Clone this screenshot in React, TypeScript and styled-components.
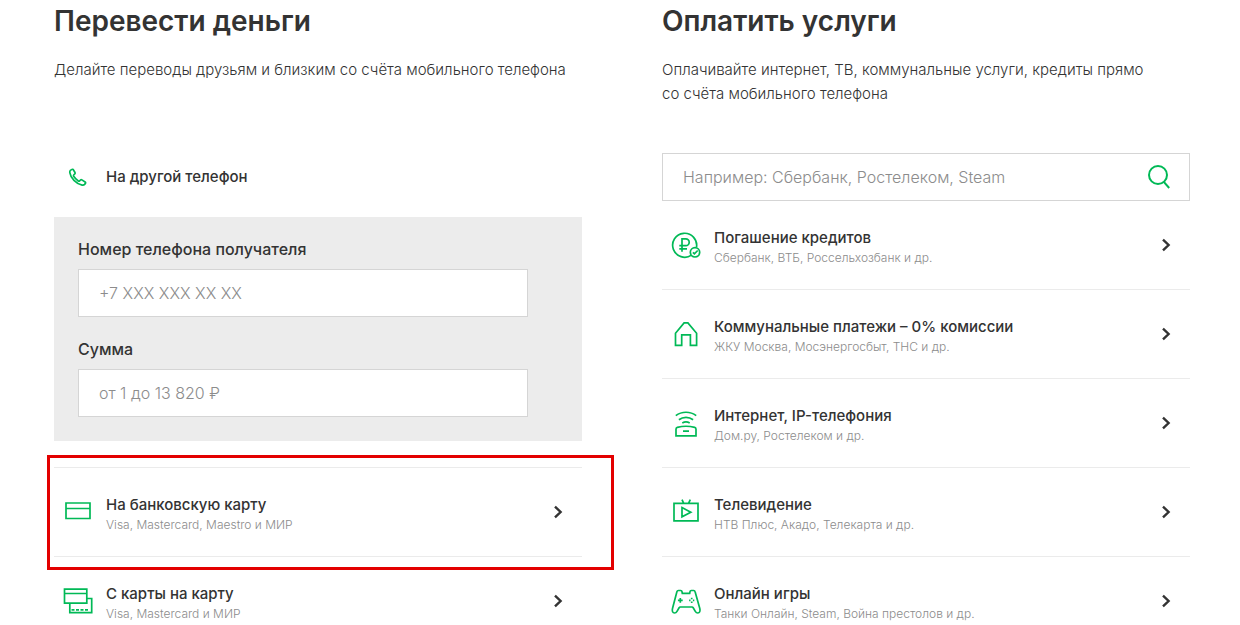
import React from "react";
import styled, { createGlobalStyle } from "styled-components";

const GlobalStyle = createGlobalStyle`
  *, *::before, *::after { box-sizing: border-box; }
  body {
    margin: 0;
    background: #fff;
    color: #333;
    font-family: Inter, Roboto, "Liberation Sans", sans-serif;
  }
`;

const Page = styled.main`
  display: grid;
  grid-template-columns: repeat(2, minmax(0, 1fr));
  column-gap: 80px;
  padding: 0 50px 0 54px;
`;

const Column = styled.section`
  min-width: 0;
`;

const Heading = styled.h2`
  margin: 0 0 16px;
  font-size: 28px;
  line-height: 42px;
  font-weight: 600;
`;

const Lead = styled.p`
  margin: 0 0 47px;
  min-height: 48px;
  font-size: 15px;
  line-height: 24px;
  font-weight: 300;
`;

const Icon = styled.svg`
  flex: none;
  width: 32px;
  height: 32px;
  margin: 0 12px 0 8px;
  fill: none;
  stroke: #00b956;
  stroke-width: 1.7;
`;

const PhoneTab = styled.h3`
  display: flex;
  align-items: center;
  height: 48px;
  margin: 0 0 16px;
  font-size: 15px;
  line-height: 20px;
  font-weight: 500;
`;

const TransferForm = styled.form`
  display: flex;
  flex-direction: column;
  gap: 20px;
  margin-bottom: 26px;
  padding: 20px 54px 24px 24px;
  background: #ececec;
`;

const Field = styled.label`
  display: flex;
  flex-direction: column;
  gap: 8px;
  font-size: 16px;
  line-height: 24px;
  font-weight: 500;
`;

const TextInput = styled.input`
  width: 100%;
  height: 48px;
  padding: 0 20px;
  border: 1px solid #d5d5d5;
  border-radius: 0;
  background: #fff;
  color: #333;
  font: 300 16px/24px Inter, Roboto, "Liberation Sans", sans-serif;
  &::placeholder { color: #8c8c8c; opacity: 1; }
`;

const SearchForm = styled.form`
  display: flex;
  align-items: center;
  height: 48px;
  border: 1px solid #d5d5d5;
`;

const SearchInput = styled(TextInput)`
  flex: 1;
  min-width: 0;
  height: 46px;
  border: 0;
`;

const SearchButton = styled.button`
  display: flex;
  margin: 0;
  padding: 0 18px;
  border: 0;
  background: none;
  cursor: pointer;
  svg {
    width: 24px;
    height: 24px;
    fill: none;
    stroke: #00b956;
    stroke-width: 2;
  }
`;

const List = styled.ul<{ $ruled?: boolean }>`
  margin: 0;
  padding: 0;
  list-style: none;
  border-top: ${(p) => (p.$ruled ? "1px solid #ebebeb" : "0")};
`;

const Item = styled.li<{ $marked?: boolean }>`
  position: relative;
  border-bottom: 1px solid #ebebeb;
  ${(p) =>
    p.$marked &&
    `&::after {
      content: "";
      position: absolute;
      inset: -13px -32px -14px -7px;
      border: 3px solid #e30000;
      pointer-events: none;
    }`}
`;

const RowLink = styled.a`
  display: flex;
  align-items: center;
  min-height: 88px;
  padding-right: 18px;
  color: inherit;
  text-decoration: none;
`;

const RowText = styled.span`
  flex: 1;
  min-width: 0;
  padding-top: 6px;
`;

const RowTitle = styled.span`
  display: block;
  font-size: 15px;
  line-height: 20px;
  font-weight: 500;
`;

const RowNote = styled.span`
  display: block;
  color: #8c8c8c;
  font-size: 12px;
  line-height: 20px;
  font-weight: 300;
`;

const Chevron = styled.svg`
  flex: none;
  width: 12px;
  height: 16px;
  fill: none;
  stroke: #333;
  stroke-width: 2.4;
`;

const icons = {
  phone: (
    <path d="M8.4 9.4 10 8.4c.5-.3 1-.1 1.300.4l1.700 2.700c.3.5.2 1-.2 1.400l-1.100 1.100c-.3.4-.3.8 0 1.300a17 17 0 0 0 4.600 4.700c.5.3 1 .3 1.300-.1l.9-.9c.4-.4.9-.4 1.400-.1l3.200 2.100c.6.4.7.9.3 1.400l-.8 1c-.6.7-1.500.9-2.500.7C14 22.700 8.600 17 7.800 11.600c-.1-.9 0-1.700.6-2.200z" />
  ),
  card: <path d="M4 7h24v15.500H4zM4 12.500h24" />,
  cards: (
    <>
      <path d="M2.500 4.200h22.300v14H2.500zM2.500 8.500h22.300M24.800 13.500h4.900v14.200H7.800v-9.500" />
      <path d="M9.500 24.800h18" strokeDasharray="3 1.500" />
    </>
  ),
  credit: (
    <>
      <path d="M21.500 26.100a12 12 0 1 1 5-7.900" />
      <circle cx="25" cy="23.300" r="4.700" />
      <path d="m22.900 23.400 1.500 1.500 3.300-3.400M12 22.700V9.900h3.800a3.400 3.400 0 0 1 0 6.800H9.300M9.300 19.900H17" />
    </>
  ),
  house: <path d="M5.500 27.400V15.300L14.100 4.900h3.800l8.700 10.400v12.100h-6.200V16.900h-8.700v10.500z" />,
  router: (
    <path d="M6 28.900v-6.700c0-1 .4-1.500 1.300-1.800 5.600-1.500 11.800-1.500 17.400 0 .9.300 1.300.8 1.300 1.800v6.700zM13 24.200h6M5.800 8.700c5.800-4.600 14.600-4.600 20.400 0M8.900 12.700c4.200-3.200 10-3.200 14.200 0M12.300 16c2.300-1.300 5.100-1.300 7.400 0" />
  ),
  tv: <path d="M4 7.300h24v17.500H4zM12 3.600l1.700 3.700M20.300 3.600l-1.800 3.700M12 11.600l8.800 4.700-8.800 4.500z" />,
  gamepad: (
    <>
      <path d="M6.900 6.800c.2-.8.7-1.300 1.500-1.300h2.300c.8 0 1.200.4 1.300 1.100l.3 1.800h7.400l.3-1.800c.1-.7.5-1.100 1.300-1.100h2.300c.8 0 1.300.5 1.500 1.300l4.700 16.800c.7 2.500-.2 4.400-2 4.400-1.200 0-1.900-.6-2.500-1.700l-2.100-3.500c-.3-.6-.6-.8-1.200-.8H10.300c-.6 0-.9.200-1.200.8L7 26.300C6.400 27.400 5.700 28 4.500 28c-1.800 0-2.700-1.900-2-4.400z" />
      <path d="M10.300 13v4.800M7.900 15.400h4.800" />
      <path d="M21.700 12.800v1.400M21.700 16.600V18M19.100 15.400h1.400M22.900 15.400h1.400" />
    </>
  ),
};

type Entry = { icon: keyof typeof icons; title: string; note: string; marked?: boolean };

const transfers: Entry[] = [
  { icon: "card", title: "На банковскую карту", note: "Visa, Mastercard, Maestro и МИР", marked: true },
  { icon: "cards", title: "С карты на карту", note: "Visa, Mastercard и МИР" },
];

const services: Entry[] = [
  { icon: "credit", title: "Погашение кредитов", note: "Сбербанк, ВТБ, Россельхозбанк и др." },
  { icon: "house", title: "Коммунальные платежи – 0% комиссии", note: "ЖКУ Москва, Мосэнергосбыт, ТНС и др." },
  { icon: "router", title: "Интернет, IP-телефония", note: "Дом.ру, Ростелеком и др." },
  { icon: "tv", title: "Телевидение", note: "НТВ Плюс, Акадо, Телекарта и др." },
  { icon: "gamepad", title: "Онлайн игры", note: "Танки Онлайн, Steam, Война престолов и др." },
];

const servicesLead =
  "Оплачивайте интернет, ТВ, коммунальные услуги, кредиты прямо со\u00a0счёта мобильного телефона";

function Glyph({ name }: { name: keyof typeof icons }) {
  return (
    <Icon viewBox="0 0 32 32" aria-hidden="true">
      {icons[name]}
    </Icon>
  );
}

function Entries({ items, ruled }: { items: Entry[]; ruled?: boolean }) {
  return (
    <List $ruled={ruled}>
      {items.map((item) => (
        <Item key={item.title} $marked={item.marked}>
          <RowLink href="#">
            <Glyph name={item.icon} />
            <RowText>
              <RowTitle>{item.title}</RowTitle>
              <RowNote>{item.note}</RowNote>
            </RowText>
            <Chevron viewBox="0 0 12 16" aria-hidden="true">
              <path d="m3 2.600 5.600 5.400L3 13.400" />
            </Chevron>
          </RowLink>
        </Item>
      ))}
    </List>
  );
}

export default function App() {
  return (
    <>
      <GlobalStyle />
      <Page>
        <Column>
          <Heading>Перевести деньги</Heading>
          <Lead>Делайте переводы друзьям и близким со счёта мобильного телефона</Lead>
          <PhoneTab>
            <Glyph name="phone" />
            На другой телефон
          </PhoneTab>
          <TransferForm>
            <Field>
              Номер телефона получателя
              <TextInput type="tel" placeholder="+7 XXX XXX XX XX" />
            </Field>
            <Field>
              Сумма
              <TextInput inputMode="numeric" placeholder="от 1 до 13 820 ₽" />
            </Field>
          </TransferForm>
          <Entries items={transfers} ruled />
        </Column>
        <Column>
          <Heading>Оплатить услуги</Heading>
          <Lead>{servicesLead}</Lead>
          <SearchForm role="search">
            <SearchInput
              type="text"
              aria-label="Поиск услуги"
              placeholder="Например: Сбербанк, Ростелеком, Steam"
            />
            <SearchButton type="button" aria-label="Найти">
              <svg viewBox="0 0 24 24" aria-hidden="true">
                <circle cx="11" cy="10" r="9" />
                <path d="m16.800 16.800 5.400 6.200" />
              </svg>
            </SearchButton>
          </SearchForm>
          <Entries items={services} />
        </Column>
      </Page>
    </>
  );
}
